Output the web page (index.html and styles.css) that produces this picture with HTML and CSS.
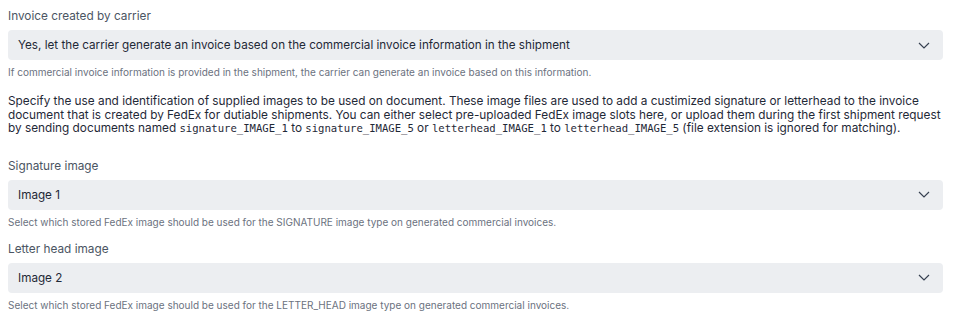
FILE: index.html
```html
<!DOCTYPE html>
<html lang="en">
<head>
    <meta charset="UTF-8">
    <meta name="viewport" content="width=device-width, initial-scale=1.0">
    <title>Commercial invoice settings</title>
    <link rel="stylesheet" href="styles.css">
</head>
<body>
    <div class="settings">
        <!-- Invoice generation -->
        <div class="field">
            <label class="field-label">Invoice created by carrier</label>
            <div class="select">
                <span>Yes, let the carrier generate an invoice based on the commercial invoice information in the shipment</span>
                <svg class="chevron" width="12" height="7" viewBox="0 0 12 7"><path d="M1 1l5 5 5-5" fill="none" stroke="#374151" stroke-width="1.2"/></svg>
            </div>
            <p class="help">If commercial invoice information is provided in the shipment, the carrier can generate an invoice based on this information.</p>
        </div>

        <p class="intro">Specify the use and identification of supplied images to be used on document. These image files are used to add a custimized signature or letterhead to the invoice document that is created by FedEx for dutiable shipments. You can either select pre-uploaded FedEx image slots here, or upload them during the first shipment request by sending documents named <code>signature_IMAGE_1</code> to <code>signature_IMAGE_5</code> or <code>letterhead_IMAGE_1</code> to <code>letterhead_IMAGE_5</code> (file extension is ignored for matching).</p>

        <!-- Signature -->
        <div class="field">
            <label class="field-label">Signature image</label>
            <div class="select">
                <span>Image 1</span>
                <svg class="chevron" width="12" height="7" viewBox="0 0 12 7"><path d="M1 1l5 5 5-5" fill="none" stroke="#374151" stroke-width="1.2"/></svg>
            </div>
            <p class="help">Select which stored FedEx image should be used for the SIGNATURE image type on generated commercial invoices.</p>
        </div>

        <!-- Letter head -->
        <div class="field">
            <label class="field-label">Letter head image</label>
            <div class="select">
                <span>Image 2</span>
                <svg class="chevron" width="12" height="7" viewBox="0 0 12 7"><path d="M1 1l5 5 5-5" fill="none" stroke="#374151" stroke-width="1.2"/></svg>
            </div>
            <p class="help">Select which stored FedEx image should be used for the LETTER_HEAD image type on generated commercial invoices.</p>
        </div>
    </div>
</body>
</html>
```
FILE: styles.css
```css
body {
    margin: 0;
    background-color: #fff;
    font-family: Inter, "Noto Sans", sans-serif;
    color: #1f2937;
}

.settings {
    padding: 7px 13px 0 8px;
}

.field-label {
    display: block;
    font-size: 11.8px;
    line-height: 18px;
    color: #4b5563;
    margin-bottom: 5px;
}

/* Fake select box */
.select {
    display: flex;
    align-items: center;
    justify-content: space-between;
    height: 30px;
    padding: 0 13px 0 10px;
    background-color: #eceef1;
    border-radius: 4px;
    font-size: 11.7px;
    color: #1f2937;
}

.chevron {
    display: block;
}

.help {
    margin: 5px 0 0;
    font-size: 10px;
    line-height: 14px;
    color: #6b7280;
}

.intro {
    margin: 16px 0 21px;
    font-size: 11.8px;
    line-height: 13.5px;
    color: #1f2937;
}

.intro code {
    font-family: "DejaVu Sans Mono", monospace;
    font-size: 10.6px;
    line-height: 1;
}

.field + .field {
    margin-top: 11px;
}
```
